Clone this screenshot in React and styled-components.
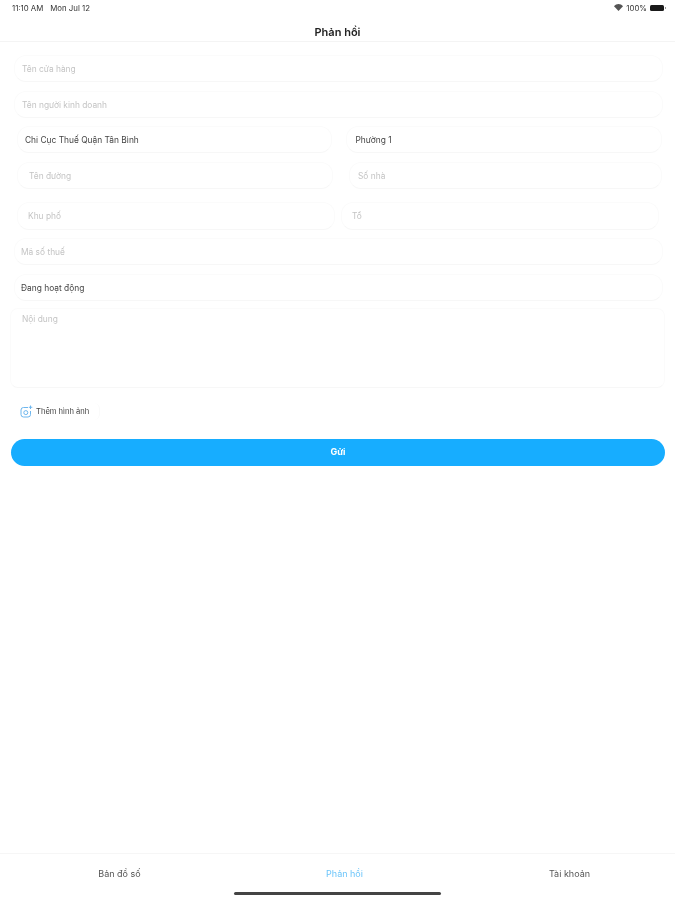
import React from "react";
import styled, { createGlobalStyle } from "styled-components";

const GlobalStyle = createGlobalStyle`
	html, body {
		margin: 0;
		padding: 0;
		background: #fff;
	}
	body {
		font-family: Inter, "Liberation Sans", sans-serif;
		color: #2b2b2b;
	}
`;

const Screen = styled.div`
	width: 675px;
	height: 900px;
	display: flex;
	flex-direction: column;
	background: #fff;
	overflow: hidden;
	filter: blur(0.5px);
`;

const StatusBar = styled.div`
	height: 15px;
	flex: none;
	display: flex;
	align-items: center;
	justify-content: space-between;
	padding: 0 9px 0 12px;
	font-size: 7.8px;
	color: #333;
`;

const StatusGroup = styled.div`
	display: flex;
	align-items: center;
	gap: ${(p) => p.$gap || 3}px;
`;

const Battery = styled.div`
	width: 14px;
	height: 6px;
	margin-right: 2px;
	border-radius: 1.5px;
	background: #1a1a1a;
	position: relative;

	&:after {
		content: "";
		position: absolute;
		right: -2px;
		top: 2px;
		width: 1px;
		height: 2px;
		background: #999;
	}
`;

const Header = styled.div`
	height: 27px;
	flex: none;
	display: flex;
	align-items: center;
	justify-content: center;
	border-bottom: 1px solid #f4f4f4;
	font-size: 11px;
	font-weight: 600;
	color: #222;
	padding-top: 8px;
	box-sizing: border-box;
`;

const Form = styled.div`
	flex: 1;
	display: flex;
	flex-direction: column;
`;

const Row = styled.div`
	display: flex;
	margin-top: ${(p) => p.$top}px;
	padding: 0 ${(p) => p.$right}px 0 ${(p) => p.$left}px;
	gap: ${(p) => p.$gap || 0}px;
`;

const Field = styled.div`
	flex: ${(p) => p.$flex || 1};
	height: ${(p) => p.$height || 27}px;
	box-sizing: border-box;
	border: 1px solid #fbfbfb;
	border-bottom-color: #f7f7f7;
	border-radius: 12px;
	display: flex;
	align-items: center;
	padding-left: ${(p) => p.$pad || 7}px;
	font-size: 8.4px;
	color: ${(p) => (p.$filled ? "#444" : "#c4c4c4")};
`;

const TextArea = styled(Field)`
	height: 80px;
	border-radius: 8px;
	align-items: flex-start;
	padding-top: 5px;
`;

const AddPhoto = styled.div`
	margin: 15px 0 0 14px;
	width: 86px;
	height: 17px;
	box-sizing: border-box;
	padding-left: 6px;
	display: flex;
	align-items: center;
	gap: 3px;
	border-right: 1px solid #fafafa;
	border-radius: 6px;
	font-size: 7.6px;
	color: #444;
`;

const SendButton = styled.div`
	margin: 19px 10px 0 11px;
	height: 27px;
	padding-bottom: 2px;
	box-sizing: border-box;
	border-radius: 14px;
	background: #17adff;
	color: #fff;
	font-size: 9px;
	font-weight: 700;
	display: flex;
	align-items: center;
	justify-content: center;
`;

const TabBar = styled.div`
	height: 47px;
	flex: none;
	box-sizing: border-box;
	border-top: 1px solid #f6f6f6;
	display: flex;
	flex-direction: column;
`;

const Tabs = styled.div`
	display: grid;
	grid-template-columns: repeat(3, 225px);
	padding: 14px 0 0 7px;
`;

const Tab = styled.div`
	text-align: center;
	font-size: 9px;
	line-height: 11px;
	color: ${(p) => (p.$active ? "#6cc5fa" : "#555")};
`;

const HomeIndicator = styled.div`
	width: 207px;
	height: 3px;
	margin: 13px auto 0;
	border-radius: 2px;
	background: #444;
`;

const WifiIcon = () => (
	<svg width="9" height="7" viewBox="0 0 18 14" fill="#555">
		<path d="M9 14 0 4.5C5-1.5 13-1.5 18 4.500Z" />
	</svg>
);

const PhotoIcon = () => (
	<svg width="13" height="13" viewBox="0 0 13 13" fill="none" stroke="#6db6ee" strokeWidth="1">
		<path d="M8 2.500H3.500A2.500 2.500 0 0 0 1 5v4.500A2.500 2.500 0 0 0 3.500 12H8a2.500 2.500 0 0 0 2.500-2.500V6" />
		<circle cx="5.800" cy="7.600" r="2" />
		<path d="M10.500.5v3.500M8.800 2.250h3.500" />
	</svg>
);

export default function App() {
	return (
		<Screen>
			<GlobalStyle />
			<StatusBar>
				<StatusGroup $gap={7}>
					<span>11:10 AM</span>
					<span>Mon Jul 12</span>
				</StatusGroup>
				<StatusGroup>
					<WifiIcon />
					<span>100%</span>
					<Battery />
				</StatusGroup>
			</StatusBar>
			<Header>Phản hồi</Header>
			<Form>
				<Row $top={13} $left={14} $right={12}>
					<Field>Tên cửa hàng</Field>
				</Row>
				<Row $top={9} $left={14} $right={12}>
					<Field>Tên người kinh doanh</Field>
				</Row>
				<Row $top={8} $left={17} $right={13} $gap={14}>
					<Field $filled>Chi Cục Thuế Quận Tân Bình</Field>
					<Field $filled $pad={9}>Phường 1</Field>
				</Row>
				<Row $top={9} $left={17} $right={13} $gap={16}>
					<Field $pad={11}>Tên đường</Field>
					<Field $pad={8}>Số nhà</Field>
				</Row>
				<Row $top={13} $left={17} $right={16} $gap={6}>
					<Field $height={28} $pad={10}>Khu phố</Field>
					<Field $height={28} $pad={10}>Tổ</Field>
				</Row>
				<Row $top={8} $left={14} $right={12}>
					<Field $pad={6}>Mã số thuế</Field>
				</Row>
				<Row $top={9} $left={14} $right={12}>
					<Field $filled $pad={6}>Đang hoạt động</Field>
				</Row>
				<Row $top={7} $left={10} $right={10}>
					<TextArea $pad={11}>Nội dung</TextArea>
				</Row>
				<AddPhoto>
					<PhotoIcon />
					Thêm hình ảnh
				</AddPhoto>
				<SendButton>Gửi</SendButton>
			</Form>
			<TabBar>
				<Tabs>
					<Tab>Bản đồ số</Tab>
					<Tab $active>Phản hồi</Tab>
					<Tab>Tài khoản</Tab>
				</Tabs>
				<HomeIndicator />
			</TabBar>
		</Screen>
	);
}
